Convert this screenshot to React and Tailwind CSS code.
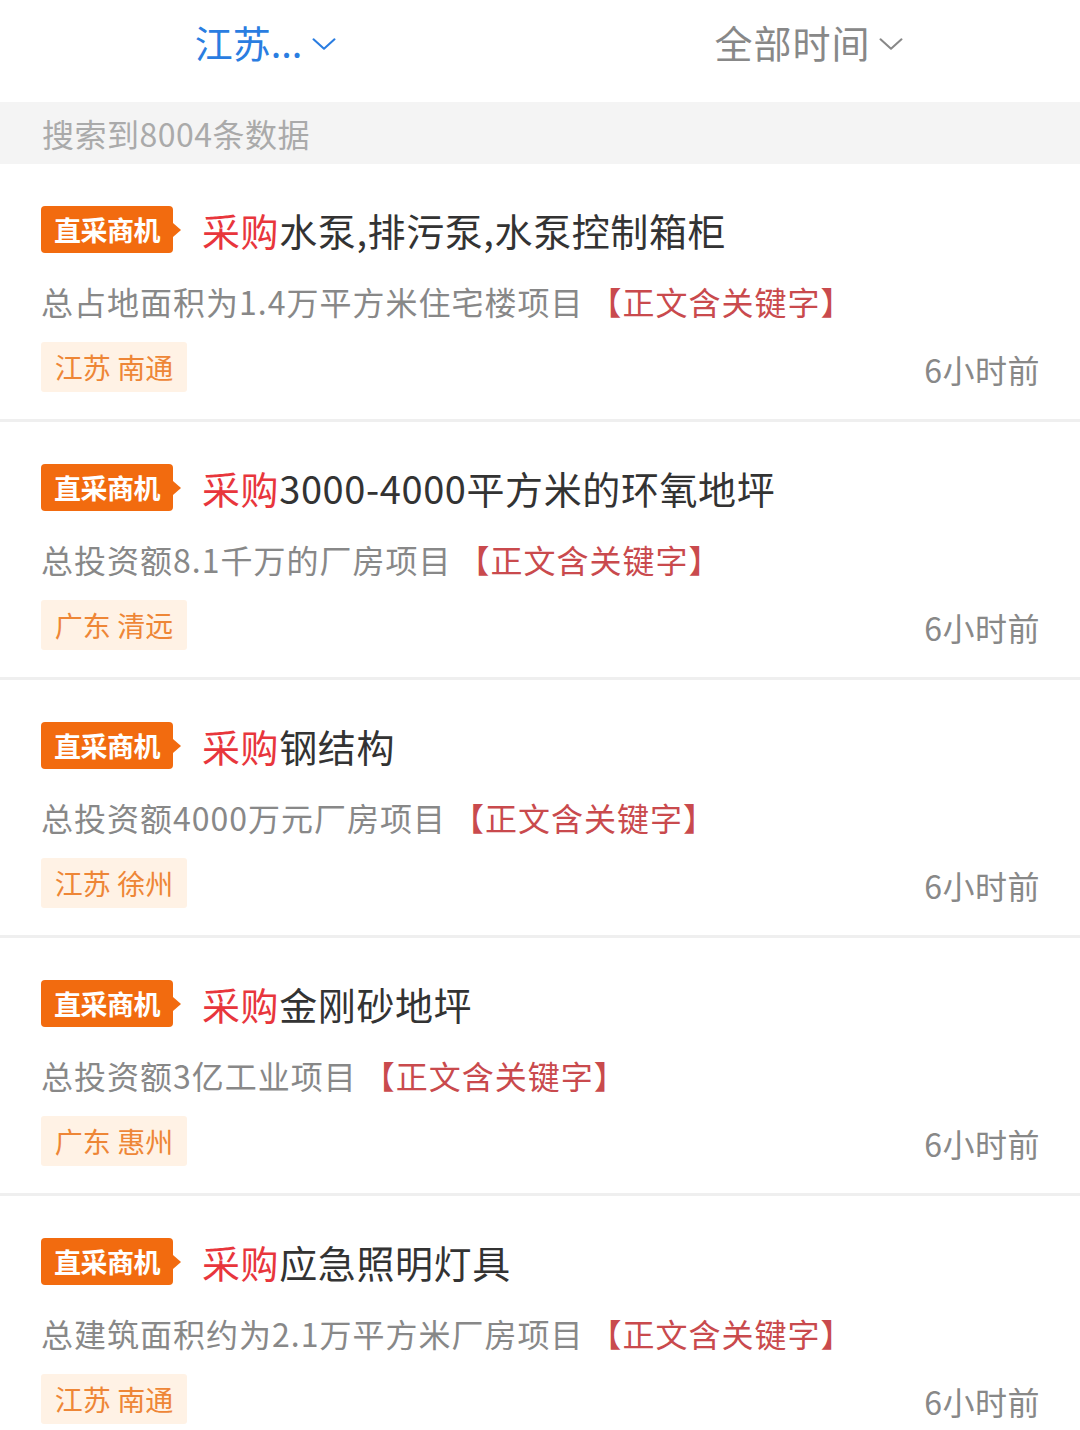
import React from 'react';

const items = [
  { title: '水泵,排污泵,水泵控制箱柜', desc: '总占地面积为1.4万平方米住宅楼项目', place: '江苏 南通' },
  { title: '3000-4000平方米的环氧地坪', desc: '总投资额8.1千万的厂房项目', place: '广东 清远' },
  { title: '钢结构', desc: '总投资额4000万元厂房项目', place: '江苏 徐州' },
  { title: '金刚砂地坪', desc: '总投资额3亿工业项目', place: '广东 惠州' },
  { title: '应急照明灯具', desc: '总建筑面积约为2.1万平方米厂房项目', place: '江苏 南通' },
];

const Chevron = ({ className }) => (
  <svg viewBox="0 0 24 24" className={className} fill="none" stroke="currentColor" strokeWidth="1.8" strokeLinecap="round" strokeLinejoin="round">
    <path d="M3 8l9 8 9-8" />
  </svg>
);

const Badge = () => (
  <div className="relative flex items-center shrink-0">
    <div className="h-[47px] w-[132px] rounded-[4px] bg-[#f26b0f] flex items-center justify-center text-white text-[27px] font-bold leading-none tracking-[-0.5px]">
      直采商机
    </div>
    <div className="w-0 h-0 border-y-[7px] border-y-transparent border-l-[8px] border-l-[#f26b0f]" />
  </div>
);

const Card = ({ item }) => (
  <div className="bg-white pt-[42px] pb-[27px] pl-[41px] pr-[40px] border-b-[3px] border-[#efefef]">
    <div className="flex items-center">
      <Badge />
      <div className="ml-[21px] text-[38px] leading-none text-[#333] whitespace-nowrap tracking-[0.6px]">
        <span className="text-[#e8363c]">采购</span>
        {item.title}
      </div>
    </div>
    <div className="mt-[28px] text-[32px] leading-[40px] text-[#888] whitespace-nowrap tracking-[1px]">
      {item.desc}
      <span className="text-[#c94a4d] ml-[6px]">【正文含关键字】</span>
    </div>
    <div className="mt-[21px] flex items-center justify-between">
      <div className="h-[50px] w-[146px] rounded-[3px] bg-[#fff2e5] flex items-center justify-center text-[28px] text-[#ee8636] leading-none">
        {item.place}
      </div>
      <div className="text-[32px] text-[#888] leading-none mt-[4px] tracking-[0.5px]">6小时前</div>
    </div>
  </div>
);

export default function App() {
  return (
    <div className="w-[1080px] min-h-[1430px] bg-white overflow-hidden" style={{ fontFamily: '"Noto Sans CJK SC", "Noto Sans", sans-serif' }}>
      <div className="h-[102px] flex items-center pb-[18px]">
        <div className="flex-1 flex items-center justify-center text-[#2a7de1] text-[38px] leading-none pr-[10px]">
          <span>江苏...</span>
          <Chevron className="w-[28px] h-[28px] ml-[8px] mt-[4px]" />
        </div>
        <div className="flex-1 flex items-center justify-center text-[#888] text-[38px] leading-none pr-[4px]">
          <span className="tracking-[1px]">全部时间</span>
          <Chevron className="w-[28px] h-[28px] ml-[6px] mt-[4px]" />
        </div>
      </div>
      <div className="h-[62px] bg-[#f4f4f4] flex items-center pl-[42px] text-[32px] text-[#aaa] leading-none tracking-[0.5px]">
        搜索到8004条数据
      </div>
      {items.map((it, i) => (
        <Card key={i} item={it} />
      ))}
    </div>
  );
}
